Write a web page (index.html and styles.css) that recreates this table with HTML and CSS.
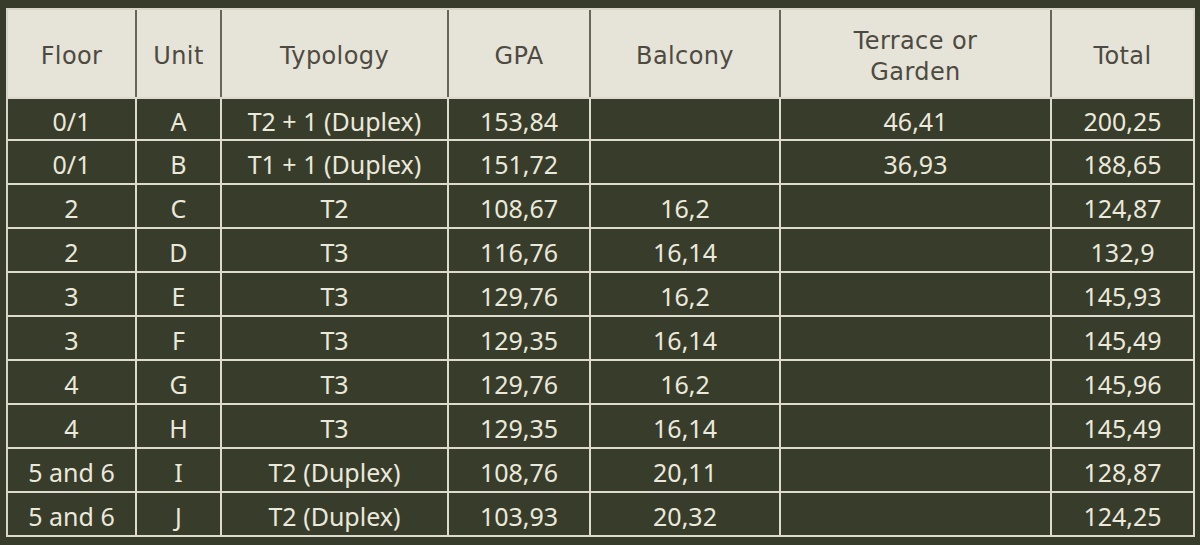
FILE: index.html
```html
<!DOCTYPE html>
<html>
<head>
<meta charset="utf-8">
<link rel="stylesheet" href="styles.css">
</head>
<body>
<div class="wrap">
<table class="units">
<colgroup>
<col class="c-floor"><col class="c-unit"><col class="c-typ"><col class="c-gpa"><col class="c-bal"><col class="c-ter"><col class="c-tot">
</colgroup>
<thead>
<tr><th>Floor</th><th>Unit</th><th>Typology</th><th>GPA</th><th>Balcony</th><th>Terrace or<br>Garden</th><th>Total</th></tr>
</thead>
<tbody>
<tr><td>0/1</td><td>A</td><td>T2 + 1 (Duplex)</td><td>153,84</td><td></td><td>46,41</td><td>200,25</td></tr>
<tr><td>0/1</td><td>B</td><td>T1 + 1 (Duplex)</td><td>151,72</td><td></td><td>36,93</td><td>188,65</td></tr>
<tr><td>2</td><td>C</td><td>T2</td><td>108,67</td><td>16,2</td><td></td><td>124,87</td></tr>
<tr><td>2</td><td>D</td><td>T3</td><td>116,76</td><td>16,14</td><td></td><td>132,9</td></tr>
<tr><td>3</td><td>E</td><td>T3</td><td>129,76</td><td>16,2</td><td></td><td>145,93</td></tr>
<tr><td>3</td><td>F</td><td>T3</td><td>129,35</td><td>16,14</td><td></td><td>145,49</td></tr>
<tr><td>4</td><td>G</td><td>T3</td><td>129,76</td><td>16,2</td><td></td><td>145,96</td></tr>
<tr><td>4</td><td>H</td><td>T3</td><td>129,35</td><td>16,14</td><td></td><td>145,49</td></tr>
<tr><td>5 and 6</td><td>I</td><td>T2 (Duplex)</td><td>108,76</td><td>20,11</td><td></td><td>128,87</td></tr>
<tr><td>5 and 6</td><td>J</td><td>T2 (Duplex)</td><td>103,93</td><td>20,32</td><td></td><td>124,25</td></tr>
</tbody>
</table>
</div>
</body>
</html>
```

FILE: styles.css
```css
html, body {
  margin: 0;
  padding: 0;
  background: #383c2a;
}
.wrap {
  padding: 8px 7px 9px 6px;
}
.units {
  width: 1187px;
  table-layout: fixed;
  border-collapse: separate;
  border-spacing: 0;
  border-top: 2px solid #d8d6c8;
  border-left: 2px solid #d8d6c8;
}
.c-floor { width: 129px; }
.c-unit { width: 85px; }
.c-typ { width: 227px; }
.c-gpa { width: 142px; }
.c-bal { width: 190px; }
.c-ter { width: 271px; }
.c-tot { width: 143px; }

.units th {
  background: #e6e3d8;
  color: #4d4a41;
  font-family: "DejaVu Sans", sans-serif;
  font-weight: 400;
  font-size: 24px;
  letter-spacing: 0.4px;
  line-height: 31px;
  height: 87px;
  padding: 6px 0 0;
  text-align: center;
  border-right: 2px solid #66655a;
  box-sizing: border-box;
}
.units th:last-child {
  border-right: 2px solid #d8d6c8;
}
.units td {
  color: #ebe8dc;
  font-family: "Noto Sans", sans-serif;
  font-size: 25px;
  line-height: 30px;
  height: 44px;
  padding: 4px 0 0;
  text-align: center;
  border-right: 2px solid #dedbcd;
  border-bottom: 2px solid #dedbcd;
  box-sizing: border-box;
}
.units tbody tr:first-child td {
  border-top: 2px solid #dedbcd;
}
```
